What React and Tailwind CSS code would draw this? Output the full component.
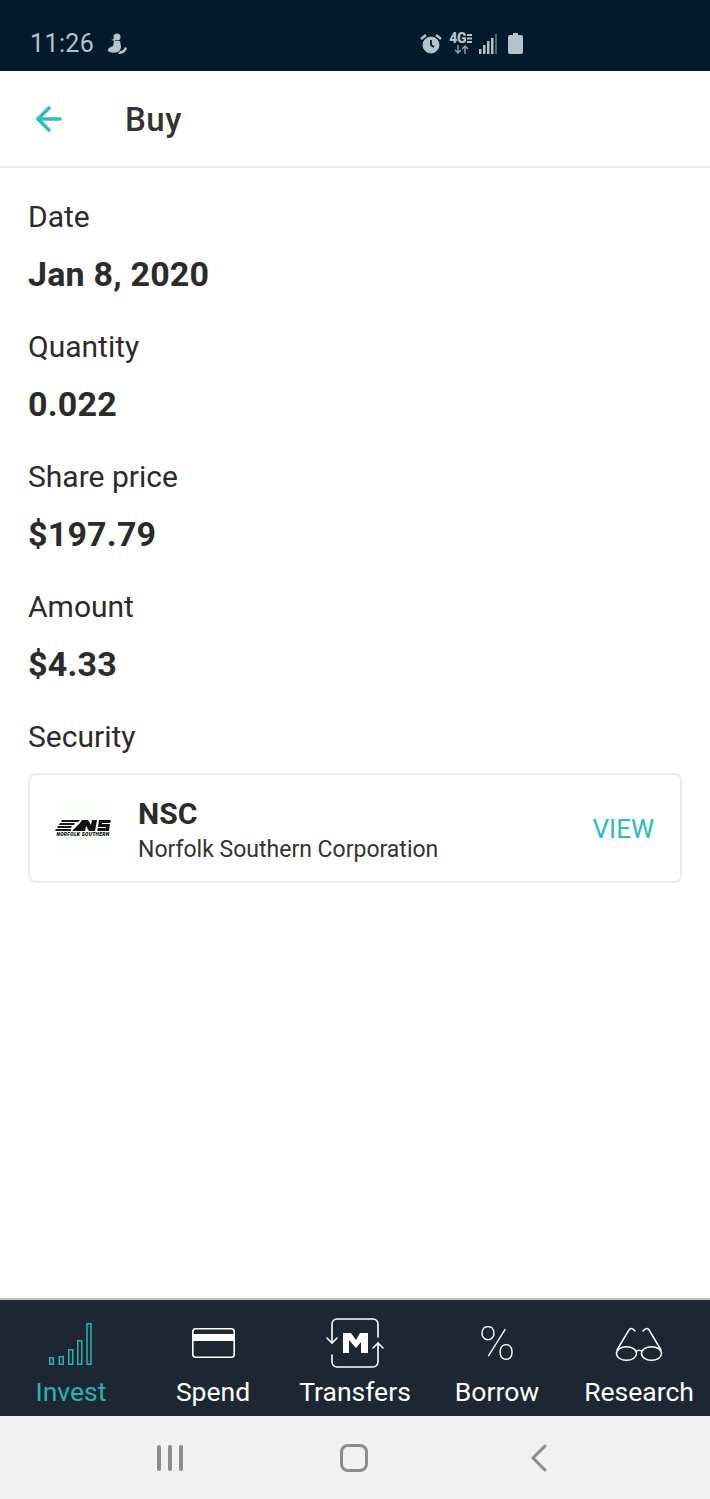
import React from "react";
import { ArrowLeft } from "lucide-react";

const rows = [
  { label: "Date", value: "Jan 8, 2020" },
  { label: "Quantity", value: "0.022" },
  { label: "Share price", value: "$197.79" },
  { label: "Amount", value: "$4.33" },
];

// tab icons share one 60x52 box so they sit on the same line
function InvestIcon() {
  return (
    <svg width="60" height="52" viewBox="0 0 60 52" fill="none" stroke="currentColor" strokeWidth="1.5">
      <rect x="8.750" y="41.750" width="3.500" height="6.500" />
      <rect x="18.250" y="40.750" width="4" height="7.500" />
      <rect x="27.750" y="33.750" width="4" height="14.500" />
      <rect x="36.750" y="24.750" width="4" height="23.500" />
      <rect x="46" y="7.750" width="4" height="40.500" />
    </svg>
  );
}

function SpendIcon() {
  return (
    <svg width="60" height="52" viewBox="0 0 60 52" fill="none">
      <rect x="9.800" y="12.800" width="41.400" height="28.400" rx="3" stroke="currentColor" strokeWidth="1.600" />
      <rect x="9" y="18" width="43" height="7" fill="currentColor" />
    </svg>
  );
}

function TransfersIcon() {
  return (
    <svg width="60" height="52" viewBox="0 0 60 52" fill="none" stroke="currentColor" strokeWidth="1.600" strokeLinecap="round" strokeLinejoin="round">
      <path d="M7 27V8a5 5 0 0 1 5-5h36a5 5 0 0 1 5 5v13" />
      <path d="M53 27v19a5 5 0 0 1-5 5H12a5 5 0 0 1-5-5v-7" />
      <path d="M2 22l5 5 5-5" />
      <path d="M48 32l5-5 5 5" />
      <path d="M18 17h8l5 7 4-7h8v20h-7V26l-5 6-7-8v13h-6z" fill="currentColor" stroke="none" />
    </svg>
  );
}

function GlassesIcon() {
  return (
    <svg width="60" height="52" viewBox="0 0 60 52" fill="none" stroke="currentColor" strokeWidth="1.500" strokeLinecap="round">
      <ellipse cx="17.500" cy="37.500" rx="10" ry="6.800" />
      <ellipse cx="42.500" cy="37.500" rx="10" ry="6.800" />
      <path d="M27.500 35c1.500-1 3.500-1 5 0" />
      <path d="M8 34L20 14c1-2 3-2.500 6 1" />
      <path d="M52 34L40 14c-1-2-3-2.500-6 1" />
    </svg>
  );
}

function NorfolkLogo() {
  return (
    <div className="flex h-[56px] w-[56px] flex-col items-center justify-center bg-[#fcfefc]">
      <svg width="56" height="11" viewBox="0 0 56 11">
        <path d="M7 0h18l-2 2H6zM5 3h15l-1 2H4zM3 6h14l-1 2H2zM1 9h15v2H0z" fill="#1a1a1a" />
        <path d="M17 11l5-5 3-3 2-3h6l3 5 1-5h5l-2 11h-6l-3-5-1 5z" fill="#111" />
        <path d="M44 0h12l-1 3h-8v1h8l-1 7H42l1-3h8V7h-8z" fill="#111" />
      </svg>
      <span className="mt-px text-[5px] leading-[4px] font-black tracking-[0.3px] whitespace-nowrap text-black italic">NORFOLK SOUTHERN</span>
    </div>
  );
}

function NavItem({ label, active, children }) {
  return (
    <div className={`flex w-[142px] flex-col items-center ${active ? "text-[#2ab3ae]" : "text-white"}`}>
      <div className="flex h-[52px] w-[60px] items-start justify-center">{children}</div>
      <span className="mt-[7px] text-[26.500px] leading-[34px] whitespace-nowrap">{label}</span>
    </div>
  );
}

export default function App() {
  return (
    <div className="flex h-[1499px] w-[710px] flex-col overflow-hidden bg-white font-['Roboto',sans-serif] text-[#2b2b2b]">
      {/* status bar */}
      <div className="flex h-[71px] items-center bg-[#021a2b] pt-[16px] pl-[30px] text-[#b4c2c9]">
        <span className="text-[25px] leading-[30px] tracking-[0.4px]">11:26</span>
        <svg className="ml-[13px]" width="20" height="21" viewBox="0 0 20 21" fill="currentColor">
          <circle cx="10" cy="4" r="3.500" />
          <path d="M9 5L4 7l4 1z" />
          <path d="M7 8h6l1 5c0 3-1 5-3 6-3 1-8 1-10-1-1-2 2-4 5-5z" />
          <path d="M13 18c3 0 4-2 5-4l2 1c-1 4-4 6-9 6z" />
        </svg>
        <div className="ml-[293px] flex items-center">
          <svg width="22" height="21" viewBox="0 0 22 21" fill="none" stroke="currentColor">
            <circle cx="11" cy="12" r="8" fill="currentColor" />
            <path d="M11 7v5l3 2" stroke="#021a2b" strokeWidth="1.800" />
            <path d="M1 6l5-4M21 6l-5-4" strokeWidth="2.500" />
          </svg>
          <div className="ml-[7px] flex w-[25px] flex-col">
            <div className="flex items-center">
              <span className="text-[14px] leading-[11px] font-black tracking-[-0.5px]">4G</span>
              <svg className="ml-px" width="5" height="9" viewBox="0 0 5 9" fill="currentColor">
                <path d="M0 0h5v2H0zM0 3.500h5v2H0zM0 7h5v2H0z" />
              </svg>
            </div>
            <svg className="mt-[1px] ml-[5px]" width="15" height="9" viewBox="0 0 15 9" fill="none" stroke="#8b9aa2" strokeWidth="1.500">
              <path d="M4 0v8M1 5l3 3 3-3M11 9V1M8 4l3-3 3 3" />
            </svg>
          </div>
          <svg className="ml-[5px]" width="18" height="20" viewBox="0 0 18 20" fill="currentColor">
            <rect x="0" y="15" width="2.500" height="5" />
            <rect x="4" y="11" width="2.500" height="9" />
            <rect x="8" y="7" width="2.500" height="13" />
            <rect x="12" y="4" width="2.500" height="16" />
            <rect x="16" y="0" width="2" height="20" opacity="0.45" />
          </svg>
          <svg className="ml-[11px]" width="15" height="21" viewBox="0 0 15 21" fill="currentColor">
            <path d="M5 0h5v2h3a2 2 0 0 1 2 2v15a2 2 0 0 1-2 2H2a2 2 0 0 1-2-2V4a2 2 0 0 1 2-2h3z" />
          </svg>
        </div>
      </div>

      {/* toolbar */}
      <div className="flex h-[97px] items-center border-b-2 border-[#ececec] pl-[30px]">
        <ArrowLeft className="text-[#2bbdb8]" size={38} strokeWidth={2.200} />
        <span className="mt-[2px] ml-[57px] text-[33px] leading-none font-medium tracking-[0.5px] text-[#333]">Buy</span>
      </div>

      {/* details */}
      <div className="flex-1 px-[28px] pt-[29px]">
        {rows.map((row) => (
          <div key={row.label} className="mb-[30px]">
            <div className="text-[30px] leading-[40px]">{row.label}</div>
            <div className="mt-[15px] text-[34px] leading-[45px] font-bold tracking-[0.2px]">{row.value}</div>
          </div>
        ))}
        <div className="text-[30px] leading-[40px]">Security</div>
        <div className="mt-[16px] flex h-[110px] w-[654px] items-center rounded-[8px] border-2 border-[#ececec] pr-[26px] pl-[25px]">
          <NorfolkLogo />
          <div className="mt-[8px] ml-[27px] flex-1">
            <div className="text-[30px] leading-[36px] font-bold">NSC</div>
            <div className="text-[23px] leading-[36px] text-[#333]">Norfolk Southern Corporation</div>
          </div>
          <span className="mt-[2px] text-[26px] text-[#2bbdb8]">VIEW</span>
        </div>
      </div>

      {/* bottom tabs */}
      <div className="flex h-[118px] border-t-2 border-[#b9bec2] bg-[#1d2733] pt-[16px]">
        <NavItem label="Invest" active>
          <InvestIcon />
        </NavItem>
        <NavItem label="Spend">
          <SpendIcon />
        </NavItem>
        <NavItem label="Transfers">
          <TransfersIcon />
        </NavItem>
        <NavItem label="Borrow">
          <span className="text-[49px] leading-[55px] font-thin">%</span>
        </NavItem>
        <NavItem label="Research">
          <GlassesIcon />
        </NavItem>
      </div>

      {/* android nav bar */}
      <div className="flex h-[83px] items-center bg-[#f1f1f1] text-[#8c8c8c]">
        <div className="ml-[157px] flex gap-[7px]">
          <div className="h-[26px] w-[4px] rounded-sm bg-[#8c8c8c]" />
          <div className="h-[26px] w-[4px] rounded-sm bg-[#8c8c8c]" />
          <div className="h-[26px] w-[4px] rounded-sm bg-[#8c8c8c]" />
        </div>
        <div className="ml-[157px] h-[28px] w-[28px] rounded-[8px] border-[3px] border-[#8c8c8c]" />
        <svg className="ml-[162px]" width="18" height="28" viewBox="0 0 18 28" fill="none" stroke="currentColor" strokeWidth="3" strokeLinecap="round" strokeLinejoin="round">
          <path d="M15 2L3 14l12 12" />
        </svg>
      </div>
    </div>
  );
}
